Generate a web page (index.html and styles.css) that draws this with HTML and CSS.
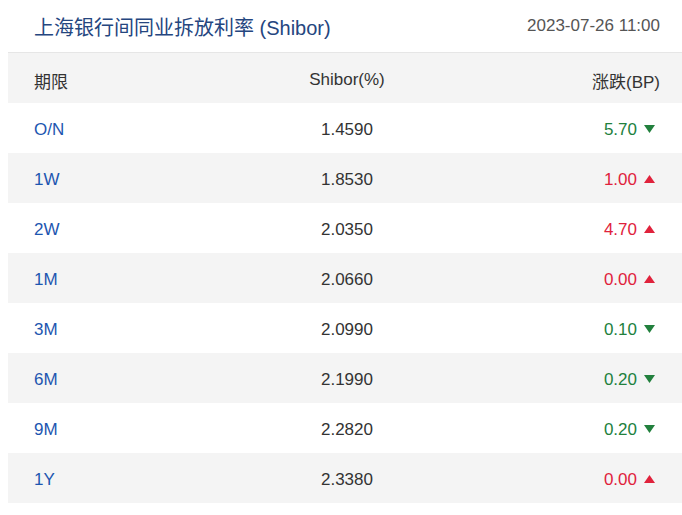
FILE: index.html
```html
<!DOCTYPE html>
<html lang="zh">
<head>
<meta charset="utf-8">
<link rel="stylesheet" href="styles.css">
</head>
<body>
<div class="panel">
  <div class="head">
    <div class="title">上海银行间同业拆放利率 (Shibor)</div>
    <div class="date">2023-07-26 11:00</div>
  </div>
  <div class="table">
    <div class="row thead"><span class="c1">期限</span><span class="c2">Shibor(%)</span><span class="c3">涨跌(BP)</span></div>
    <div class="row"><span class="c1 term">O/N</span><span class="c2">1.4590</span><span class="c3 down">5.70<svg class="arr" viewBox="0 0 11 8"><path d="M0 0H11L5.5 8Z"/></svg></span></div>
    <div class="row alt"><span class="c1 term">1W</span><span class="c2">1.8530</span><span class="c3 up">1.00<svg class="arr" viewBox="0 0 11 8"><path d="M0 8H11L5.5 0Z"/></svg></span></div>
    <div class="row"><span class="c1 term">2W</span><span class="c2">2.0350</span><span class="c3 up">4.70<svg class="arr" viewBox="0 0 11 8"><path d="M0 8H11L5.5 0Z"/></svg></span></div>
    <div class="row alt"><span class="c1 term">1M</span><span class="c2">2.0660</span><span class="c3 up">0.00<svg class="arr" viewBox="0 0 11 8"><path d="M0 8H11L5.5 0Z"/></svg></span></div>
    <div class="row"><span class="c1 term">3M</span><span class="c2">2.0990</span><span class="c3 down">0.10<svg class="arr" viewBox="0 0 11 8"><path d="M0 0H11L5.5 8Z"/></svg></span></div>
    <div class="row alt"><span class="c1 term">6M</span><span class="c2">2.1990</span><span class="c3 down">0.20<svg class="arr" viewBox="0 0 11 8"><path d="M0 0H11L5.5 8Z"/></svg></span></div>
    <div class="row"><span class="c1 term">9M</span><span class="c2">2.2820</span><span class="c3 down">0.20<svg class="arr" viewBox="0 0 11 8"><path d="M0 0H11L5.5 8Z"/></svg></span></div>
    <div class="row alt"><span class="c1 term">1Y</span><span class="c2">2.3380</span><span class="c3 up">0.00<svg class="arr" viewBox="0 0 11 8"><path d="M0 8H11L5.5 0Z"/></svg></span></div>
  </div>
</div>
</body>
</html>
```
FILE: styles.css
```css
html, body {
  margin: 0;
  padding: 0;
  background: #fff;
}
body {
  padding-left: 8px;
  font-family: "Liberation Sans", Arial, "Noto Sans CJK SC", sans-serif;
  color: #333;
}
.panel {
  width: 674px;
}
.head {
  height: 52px;
  border-bottom: 1px solid #e6e6e6;
  display: flex;
  align-items: center;
  justify-content: space-between;
  padding: 0 22px 0 26px;
}
.title {
  font-size: 20px;
  color: #25467f;
}
.date {
  font-size: 17px;
  color: #555;
}
.row {
  box-sizing: border-box;
  height: 50px;
  display: grid;
  grid-template-columns: 1fr 1fr 1fr;
  align-items: center;
  padding: 4px 22px 0 26px;
  font-size: 17px;
}
.thead, .alt {
  background: #f4f4f4;
}
.thead {
  color: #333;
}
.c1 { text-align: left; }
.c2 { text-align: center; }
.c3 {
  display: flex;
  justify-content: flex-end;
  align-items: center;
}
.term { color: #1d56b0; }
.up { color: #e0223c; }
.down { color: #22803d; }
.arr {
  width: 11px;
  height: 8px;
  margin-left: 7px;
  margin-right: 5px;
  margin-top: -2px;
  fill: currentColor;
}
```
